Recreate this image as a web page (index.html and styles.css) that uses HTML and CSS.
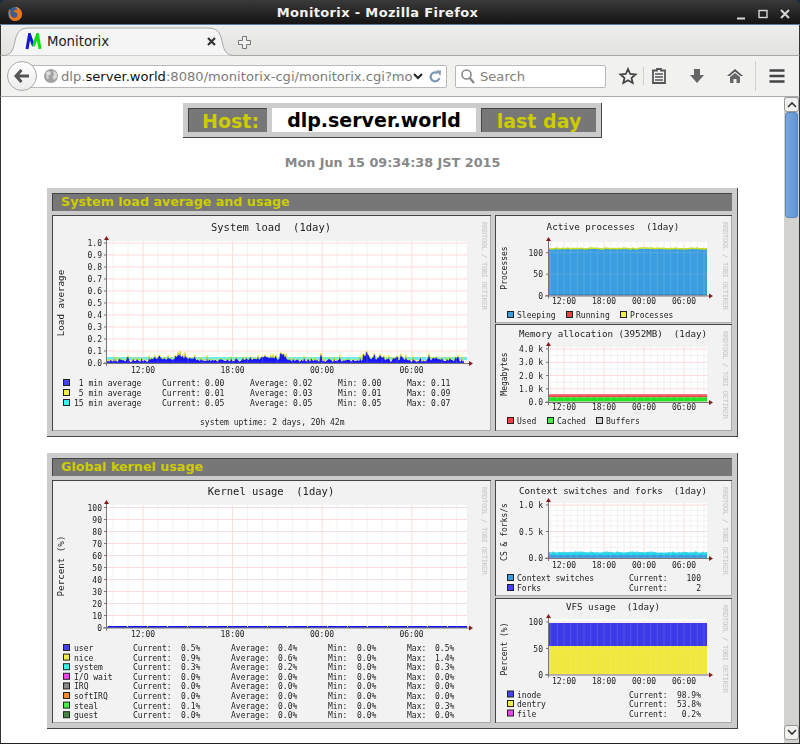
FILE: index.html
```html
<!DOCTYPE html>
<html lang="en">
<head>
    <meta charset="UTF-8">
    <title>Monitorix - Mozilla Firefox</title>
    <link rel="stylesheet" href="styles.css">
    <script src="charts.js" defer></script>
</head>
<body>
<div class="window">
    <header class="titlebar">
        <svg class="ff-logo" width="16" height="16" viewBox="0 0 16 16">
            <circle cx="8" cy="8" r="7" fill="#2f5f96"/>
            <path d="M2 3 C1 8 2 15 8 15 C13 15 15.500 11 15 7 C14 3 11 1 8 1 C10 2 11 3 11 4 C9 3 7 4 6.500 6 C8 5.500 10.500 6.500 10.500 9 C10.500 11 8 12.500 6 11.500 C3.500 10.500 3 7 3.500 5 Z" fill="#e8751a"/>
            <path d="M8 1 C10 1.300 12 2.500 13 4 C11.500 3 10 2.500 8 1 Z" fill="#f6c244"/>
        </svg>
        <span class="window-title">Monitorix - Mozilla Firefox</span>
        <div class="window-buttons">
            <svg width="12" height="12" viewBox="0 0 12 12"><path d="M2 10.500 H10" stroke="#d8d8d8" stroke-width="2"/></svg>
            <svg width="12" height="12" viewBox="0 0 12 12"><rect x="2" y="2.500" width="8" height="7" fill="none" stroke="#d8d8d8" stroke-width="1.400"/></svg>
            <svg width="12" height="12" viewBox="0 0 12 12"><path d="M2 2 L10 10 M10 2 L2 10" stroke="#d8d8d8" stroke-width="2"/></svg>
        </div>
    </header>

    <div class="tabbar">
        <div class="tab">
            <svg class="tab-shape" width="233" height="29" viewBox="0 0 233 29">
                <path d="M0 28.500 C9 28.500 11 24 13 14 C15 5 18 1 27 1 L206 1 C215 1 218 5 220 14 C222 24 224 28.500 233 28.500" fill="#f5f5f5" stroke="#a8a8a8"/>
            </svg>
            <svg class="favicon" width="17" height="17" viewBox="0 0 17 17">
                <path d="M2 16 L4.500 1.500 L8.500 13" fill="none" stroke="#1515d8" stroke-width="3"/>
                <path d="M8.500 13 L12.500 1.500 L15 16" fill="none" stroke="#10e010" stroke-width="3"/>
            </svg>
            <span class="tab-title">Monitorix</span>
            <svg class="tab-close" width="9" height="9" viewBox="0 0 9 9"><path d="M1 1 L8 8 M8 1 L1 8" stroke="#333" stroke-width="2.200"/></svg>
        </div>
        <svg class="new-tab" width="13" height="13" viewBox="0 0 13 13"><path d="M4.500 .5 H8.500 V4.500 H12.500 V8.500 H8.500 V12.500 H4.500 V8.500 H.5 V4.500 H4.500 Z" fill="#f0f0f0" stroke="#777"/></svg>
    </div>

    <nav class="navbar">
        <div class="back-btn">
            <svg width="16" height="14" viewBox="0 0 16 14"><path d="M7.500 1 L2 7 L7.500 13 M2.500 7 H15" fill="none" stroke="#555" stroke-width="3"/></svg>
        </div>
        <div class="urlbar">
            <svg class="globe" width="14" height="14" viewBox="0 0 14 14">
                <circle cx="7" cy="7" r="7" fill="#a2a2a2"/>
                <path d="M2 3 L6 2 L7 5 L4 7 L5 10 L3 10 Z M9 1.500 L12.500 4 L13 8 L10 11 L8.500 8 L10 6 Z" fill="#dcdcdc"/>
            </svg>
            <div class="url-text">dlp.<b>server.world</b>:8080/monitorix-cgi/monitorix.cgi?mo</div>
            <svg width="10" height="7" viewBox="0 0 10 7"><path d="M1 1 L5 5 L9 1" fill="none" stroke="#222" stroke-width="2"/></svg>
            <svg class="reload" width="12" height="13" viewBox="0 0 12 13"><path d="M10.500 8 A4.500 4.500 0 1 1 8.500 3" fill="none" stroke="#7d98b5" stroke-width="2.200"/><path d="M7 .5 L12 .5 L11.500 6 Z" fill="#7d98b5"/></svg>
        </div>
        <div class="searchbar">
            <svg width="14" height="15" viewBox="0 0 14 15"><circle cx="5.500" cy="5.500" r="4.500" fill="none" stroke="#888" stroke-width="1.600"/><path d="M8.800 9 L13 14" stroke="#888" stroke-width="2.200"/></svg>
            <span class="search-text">Search</span>
        </div>
        <div class="tools">
            <svg class="tool star" width="20" height="18" viewBox="0 0 20 18"><path d="M10 2 L12.200 7 L17.500 7.500 L13.500 11 L14.700 16 L10 13.300 L5.300 16 L6.500 11 L2.500 7.500 L7.800 7 Z" fill="none" stroke="#444" stroke-width="1.800"/></svg>
            <span class="tool-sep"></span>
            <svg class="tool clip" width="20" height="16" viewBox="0 0 20 16"><path d="M8 1 H12 V2.500 H16 V15 H4 V2.500 H8 Z" fill="none" stroke="#555" stroke-width="1.800"/><path d="M6 6 H14 M6 9 H14 M6 12 H14" stroke="#555" stroke-width="1.500"/></svg>
            <svg class="tool down" width="20" height="16" viewBox="0 0 20 16"><path d="M7 1 H13 V7 H17 L10 15 L3 7 H7 Z" fill="#666"/></svg>
            <svg class="tool home" width="20" height="16" viewBox="0 0 20 16"><path d="M10 1 L18 8 L15.500 8 L10 3.500 L4.500 8 L2 8 Z" fill="#555"/><path d="M5 9 L10 5 L15 9 V15 H11.500 V11 H8.500 V15 H5 Z" fill="#666"/></svg>
            <span class="tool-sep tall"></span>
            <svg class="tool menu" width="20" height="16" viewBox="0 0 20 16"><path d="M2.500 2.500 H17.500 M2.500 8 H17.500 M2.500 13.500 H17.500" stroke="#444" stroke-width="2.600"/></svg>
        </div>
    </nav>

    <div class="viewport">
        <main class="page">
            <div class="hostbar">
                <div class="host-label">Host:</div>
                <div class="host-name">dlp.server.world</div>
                <div class="host-period">last day</div>
            </div>
            <p class="datestamp">Mon Jun 15 09:34:38 JST 2015</p>

            <section class="panel">
                <h2 class="panel-title">System load average and usage</h2>
                <div class="panel-row">
                    <div class="graph graph-main" data-chart="load"></div>
                    <div class="graph-side">
                        <div class="graph" data-chart="procs"></div>
                        <div class="graph" data-chart="mem"></div>
                    </div>
                </div>
            </section>

            <section class="panel">
                <h2 class="panel-title">Global kernel usage</h2>
                <div class="panel-row">
                    <div class="graph graph-main" data-chart="kernel"></div>
                    <div class="graph-side">
                        <div class="graph" data-chart="ctx"></div>
                        <div class="graph" data-chart="vfs"></div>
                    </div>
                </div>
            </section>
        </main>
        <div class="scrollbar">
            <div class="scroll-btn">
                <svg width="10" height="7" viewBox="0 0 10 7"><path d="M1 6 L5 2 L9 6" fill="none" stroke="#333" stroke-width="1.600"/></svg>
            </div>
            <div class="scroll-thumb"></div>
            <div class="scroll-btn scroll-btn-end">
                <svg width="10" height="7" viewBox="0 0 10 7"><path d="M1 1 L5 5 L9 1" fill="none" stroke="#333" stroke-width="1.600"/></svg>
            </div>
        </div>
    </div>
</div>
</body>
</html>
```

FILE: styles.css
```css
* {
    box-sizing: border-box;
}

body {
    margin: 0;
    background-color: #fff;
    font-family: "DejaVu Sans", sans-serif;
}

.window {
    width: 800px;
    height: 744px;
    display: flex;
    flex-direction: column;
    overflow: hidden;
    background-color: #1c2a44;
    border-bottom: 1px solid #222;
}

/* title bar */
.titlebar {
    height: 25px;
    flex: none;
    position: relative;
    display: flex;
    align-items: center;
    justify-content: center;
    background: linear-gradient(#3a3a3a, #141414);
    border-radius: 6px 6px 0 0;
    border-bottom: 1px solid #5b7aa8;
}

.ff-logo {
    position: absolute;
    left: 7px;
    top: 6px;
}

.window-title {
    margin-left: -45px;
    color: #f2f2f2;
    font-size: 13px;
    font-weight: bold;
    letter-spacing: 0.35px;
}

.window-buttons {
    position: absolute;
    right: 9px;
    top: 8px;
    display: flex;
    gap: 10px;
}

/* tabs */
.tabbar {
    height: 31px;
    flex: none;
    display: flex;
    align-items: flex-end;
    padding-left: 2px;
    background: linear-gradient(#eeeeec, #e2e2e0);
    border-bottom: 1px solid #a8a8a8;
    border-left: 1px solid #333;
    border-right: 1px solid #333;
}

.tab {
    width: 233px;
    height: 29px;
    position: relative;
    display: flex;
    align-items: center;
    padding: 0 0 1px 23px;
    margin-bottom: -1px;
    margin-left: -1px;
}

.tab-shape {
    position: absolute;
    left: 0;
    top: 0;
}

.favicon,
.tab-title,
.tab-close {
    position: relative;
}

.tab-title {
    margin-left: 5px;
    font-size: 13.3px;
    color: #222;
}

.tab-close {
    margin-left: 98px;
}

.new-tab {
    margin: 0 0 6px 3px;
}

/* nav bar */
.navbar {
    height: 41px;
    flex: none;
    display: flex;
    align-items: center;
    padding-left: 6px;
    background: #f1f1f0;
    border-bottom: 1px solid #ababab;
    border-left: 1px solid #333;
    border-right: 1px solid #333;
}

.back-btn {
    width: 30px;
    height: 30px;
    margin-right: -15px;
    position: relative;
    z-index: 1;
    display: flex;
    align-items: center;
    justify-content: center;
    background: linear-gradient(#fff, #ececec);
    border: 1px solid #a9a9a9;
    border-radius: 50%;
}

.urlbar {
    width: 425px;
    height: 23px;
    display: flex;
    align-items: center;
    padding-left: 21px;
    background: #fff;
    border: 1px solid #b8b8b8;
    border-radius: 2px;
}

.url-text {
    width: 352px;
    margin-left: 3px;
    overflow: hidden;
    white-space: nowrap;
    font-size: 13.1px;
    color: #7b7b7b;
}

.url-text b {
    font-weight: normal;
    color: #111;
}

.urlbar .reload {
    margin-left: 6px;
}

.urlbar svg {
    flex: none;
}

.searchbar {
    width: 151px;
    height: 23px;
    margin-left: 8px;
    display: flex;
    align-items: center;
    gap: 5px;
    padding-left: 5px;
    background: #fff;
    border: 1px solid #b8b8b8;
    border-radius: 2px;
}

.search-text {
    font-size: 13.1px;
    color: #808080;
}

.tools {
    display: flex;
    align-items: center;
}

.tool {
    flex: none;
}

.star {
    margin-left: 12px;
}

.tool-sep {
    width: 1px;
    height: 18px;
    margin: 0 5px;
    background-color: #cfcfcf;
}

.tool-sep.tall {
    height: 30px;
    margin: 0 11px 0 10px;
}

.down,
.home {
    margin-left: 18px;
}

/* page area */
.viewport {
    flex: 1;
    min-height: 0;
    display: flex;
    background-color: #fff;
    border-left: 1px solid #333;
    border-right: 1px solid #333;
}

.page {
    flex: 1;
    min-width: 0;
    overflow: hidden;
    padding-top: 6px;
}

.hostbar {
    width: 419px;
    margin: 0 auto;
    display: flex;
    gap: 5px;
    padding: 5px;
    background-color: #ccc;
    border-right: 1px solid #444;
    border-bottom: 1px solid #444;
}

.hostbar > div {
    height: 24px;
    line-height: 24px;
    font-size: 19px;
    font-weight: bold;
}

.host-label,
.host-period {
    background-color: #777;
    color: #cccc00;
    border-top: 1px solid #444;
    border-left: 1px solid #444;
}

.host-label {
    width: 79px;
    padding-right: 8px;
    text-align: right;
}

.host-name {
    width: 204px;
    background-color: #fff;
    color: #000;
    text-align: center;
}

.host-period {
    width: 115px;
    text-align: center;
}

.datestamp {
    margin: 17px 0;
    text-align: center;
    font-size: 12.8px;
    font-weight: bold;
    line-height: 16px;
    color: #888;
}

.panel {
    width: 691px;
    margin: 0 auto 16px;
    padding: 5px;
    background-color: #ccc;
    border-right: 1px solid #444;
    border-bottom: 1px solid #444;
}

.panel-title {
    height: 18px;
    margin: 0 0 4px;
    padding-left: 8px;
    line-height: 16px;
    font-size: 12.7px;
    font-weight: bold;
    color: #cccc00;
    background-color: #777;
    border-top: 1px solid #444;
    border-left: 1px solid #444;
}

.panel-row {
    display: flex;
    gap: 4px;
}

.graph-side {
    display: flex;
    flex-direction: column;
    justify-content: space-between;
}

.graph {
    border-top: 1px solid #444;
    border-left: 1px solid #444;
    line-height: 0;
}

.graph svg {
    display: block;
    background-color: #f2f2f2;
    border-right: 1px solid #aaa;
    border-bottom: 1px solid #aaa;
    filter: blur(0.25px);
}

.graph text {
    font-family: "DejaVu Sans Mono", monospace;
    font-size: 8px;
    fill: #222;
    white-space: pre;
}

.graph .chart-title {
    font-size: 9.2px;
    fill: #222;
}

.graph-main .chart-title {
    font-size: 10.5px;
}

.graph .axis-label {
    font-size: 8px;
    fill: #222;
}

.graph-main .axis-label {
    font-size: 9.2px;
}

.graph .watermark {
    font-size: 7px;
    fill: #c4c4c4;
}

/* scrollbar */
.scrollbar {
    width: 15px;
    flex: none;
    position: relative;
    display: flex;
    flex-direction: column;
    align-items: center;
    padding-bottom: 3px;
    background-color: #d2d2ce;
}

.scroll-btn {
    width: 15px;
    height: 15px;
    flex: none;
    display: flex;
    align-items: center;
    justify-content: center;
    background-color: #f0f0ee;
    border: 1px solid #999;
    border-radius: 3px;
}

.scroll-btn-end {
    margin-top: auto;
}

.scroll-thumb {
    width: 13px;
    height: 106px;
    background: linear-gradient(90deg, #7aa7dc, #5f94d2);
    border: 1px solid #5a86bb;
    border-radius: 3px;
}
```

FILE: charts.js
```js
const NS = 'http://www.w3.org/2000/svg';

const BLUE = '#4444ee', YELLOW = '#eeee44', CYAN = '#44eeee', SKY = '#3a9de0';
const RED = '#ee4444', GREEN = '#44ee44', MAGENTA = '#ee44ee', GRAY = '#888888';
const ORANGE = '#ee8a2c', DARKGREEN = '#448844', LIGHTGRAY = '#cccccc';

// small seeded generator so the jagged series stay the same on every load
let seed = 17;
function rnd() {
    seed = (seed * 16807) % 2147483647;
    return seed / 2147483647;
}

function el(parent, tag, attrs, text) {
    const node = document.createElementNS(NS, tag);
    for (const k in attrs) node.setAttribute(k, attrs[k]);
    if (text !== undefined) node.textContent = text;
    parent.appendChild(node);
    return node;
}

function pct(v) {
    return v.toFixed(1) + '%';
}

const MAIN_X = [143, 232.6, 322, 411.5];
const SIDE_X = [564, 604, 644, 684];
const HOURS = ['12:00', '18:00', '00:00', '06:00'];

const charts = {
    load: {
        box: [53, 215, 438, 215],
        title: 'System load  (1day)', titleY: 230, titleX: 271,
        axis: 'Load average', axisX: 64, axisY: 302,
        x0: 106, x1: 467, top: 240, bottom: 362, minor: 6,
        xs: MAIN_X, xLabelY: 372, watermarkX: 481.5,
        ticks: [1.0, 0.9, 0.8, 0.7, 0.6, 0.5, 0.4, 0.3, 0.2, 0.1, 0.0].map((v, i) => [v.toFixed(1), 242 + i * 12]),
        labelX: 102,
        draw: drawLoad,
        legend: [
            [382, BLUE, 63, [[74, ' 1 min average'], [162, 'Current:'], [205, '0.00'], [250, 'Average:'], [293, '0.02'], [338, 'Min:'], [362, '0.00'], [407, 'Max:'], [431, '0.11']]],
            [392, YELLOW, 63, [[74, ' 5 min average'], [162, 'Current:'], [205, '0.01'], [250, 'Average:'], [293, '0.03'], [338, 'Min:'], [362, '0.01'], [407, 'Max:'], [431, '0.09']]],
            [402, CYAN, 63, [[74, '15 min average'], [162, 'Current:'], [205, '0.05'], [250, 'Average:'], [293, '0.05'], [338, 'Min:'], [362, '0.05'], [407, 'Max:'], [431, '0.07']]]
        ],
        notes: [[200, 424, 'system uptime: 2 days, 20h 42m']]
    },
    procs: {
        box: [496, 215, 236, 107],
        title: 'Active processes  (1day)', titleY: 229, titleX: 613,
        axis: 'Processes', axisX: 507, axisY: 267,
        x0: 548, x1: 707, top: 241, bottom: 294.5, minor: 6,
        xs: SIDE_X, xLabelY: 303, watermarkX: 723,
        ticks: [['100', 251.7], ['50', 273.2], ['0', 294.5]],
        labelX: 543,
        draw(g) {
            band(g, 549, 707, 247.5, 294, SKY);
            jagged(g, 549, 707, 247, 1, '#c8e020');
            el(g, 'rect', { x: 549, y: 293.500, width: 158, height: 1, fill: '#3070b0' });
        },
        legend: [[314, SKY, 507, [[517, 'Sleeping']]]],
        swatches: [[566, 314, RED, 'Running'], [620, 314, YELLOW, 'Processes']]
    },
    mem: {
        box: [496, 324, 236, 106],
        title: 'Memory allocation (3952MB)  (1day)', titleY: 336, titleX: 613,
        axis: 'Megabytes', axisX: 507, axisY: 373,
        x0: 548, x1: 707, top: 346, bottom: 401, minor: 6, yMinor: 2,
        xs: SIDE_X, xLabelY: 409, watermarkX: 723,
        ticks: [['4.0 k', 348], ['3.0 k', 361.3], ['2.0 k', 374.5], ['1.0 k', 387.8], ['0.0', 401]],
        labelX: 543,
        draw(g) {
            band(g, 549, 707, 393.3, 396.3, RED);
            band(g, 549, 707, 396.3, 400.5, '#22e022');
        },
        legend: [[420, RED, 507, [[517, 'Used']]]],
        swatches: [[547, 420, GREEN, 'Cached'], [596, 420, LIGHTGRAY, 'Buffers']]
    },
    kernel: {
        box: [53, 481, 438, 242],
        title: 'Kernel usage  (1day)', titleY: 495, titleX: 271,
        axis: 'Percent (%)', axisX: 64, axisY: 566,
        x0: 106, x1: 467, top: 505, bottom: 627.5, minor: 6,
        xs: MAIN_X, xLabelY: 637, watermarkX: 481.5,
        ticks: [100, 90, 80, 70, 60, 50, 40, 30, 20, 10, 0].map((v, i) => [String(v), 507.5 + i * 12]),
        labelX: 102,
        draw(g) {
            el(g, 'line', { x1: 107, x2: 467, y1: 627, y2: 627, stroke: '#1010e8', 'stroke-width': 1.800 });
            el(g, 'line', { x1: 107, x2: 467, y1: 626.500, y2: 626.500, stroke: YELLOW, 'stroke-width': 1, 'stroke-dasharray': '1 19' });
        },
        legend: [
            ['user', BLUE, 0.5, 0.4, 0.0, 0.5],
            ['nice', YELLOW, 0.9, 0.6, 0.0, 1.4],
            ['system', CYAN, 0.3, 0.2, 0.0, 0.3],
            ['I/O wait', MAGENTA, 0, 0, 0, 0],
            ['IRQ', GRAY, 0, 0, 0, 0],
            ['softIRQ', ORANGE, 0, 0, 0, 0],
            ['steal', GREEN, 0.1, 0.0, 0.0, 0.3],
            ['guest', DARKGREEN, 0, 0, 0, 0]
        ].map((r, i) => [648 + i * 9.6, r[1], 63, [
            [74, r[0]], [133, 'Current:'], [181, pct(r[2])], [231, 'Average:'], [278, pct(r[3])],
            [328, 'Min:'], [357, pct(r[4])], [407, 'Max:'], [435, pct(r[5])]
        ]])
    },
    ctx: {
        box: [496, 481, 236, 115],
        title: 'Context switches and forks  (1day)', titleY: 494, titleX: 613,
        axis: 'CS & forks/s', axisX: 507, axisY: 532,
        x0: 548, x1: 707, top: 503, bottom: 558, minor: 6, yMinor: 5,
        xs: SIDE_X, xLabelY: 568, watermarkX: 723,
        ticks: [['1.0 k', 505], ['0.5 k', 531.5], ['0.0', 558]],
        labelX: 543,
        draw(g) {
            band(g, 549, 707, 554, 558, SKY);
            jagged(g, 549, 707, 551.5, 1.2, '#22d4e8', 555);
        },
        legend: [
            [578, SKY, 507, [[517, 'Context switches'], [629, 'Current:']], '100'],
            [588, BLUE, 507, [[517, 'Forks'], [629, 'Current:']], '2']
        ]
    },
    vfs: {
        box: [496, 598, 236, 124],
        title: 'VFS usage  (1day)', titleY: 609, titleX: 613,
        axis: 'Percent (%)', axisX: 507, axisY: 648,
        x0: 548, x1: 707, top: 618, bottom: 673.5, minor: 6,
        xs: SIDE_X, xLabelY: 683, watermarkX: 723,
        ticks: [['100', 621], ['50', 647.5], ['0', 673.5]],
        labelX: 543,
        draw(g) {
            band(g, 549, 707, 622, 645, '#3a3ae8');
            band(g, 549, 707, 645, 673, '#f0e83c');
        },
        legend: [
            [693.500, BLUE, 507, [[517, 'inode'], [629, 'Current:']], '98.9%'],
            [703, YELLOW, 507, [[517, 'dentry'], [629, 'Current:']], '53.8%'],
            [712.500, MAGENTA, 507, [[517, 'file'], [629, 'Current:']], '0.2%']
        ]
    }
};

function band(g, x0, x1, y0, y1, fill) {
    el(g, 'rect', { x: x0, y: y0, width: x1 - x0, height: y1 - y0, fill: fill });
}

function jagged(g, x0, x1, y, amp, color, floor) {
    let pts = [];
    for (let x = x0; x <= x1; x += 2) pts.push(x + ',' + (y + rnd() * amp).toFixed(1));
    if (floor) {
        pts.push(x1 + ',' + floor, x0 + ',' + floor);
        el(g, 'polygon', { points: pts.join(' '), fill: color });
    } else {
        el(g, 'polyline', { points: pts.join(' '), fill: 'none', stroke: color, 'stroke-width': 1.500 });
    }
}

// rough copy of the 1 min / 5 min series: a low blue floor with bursts
function drawLoad(g) {
    const base = 362;
    const bursts = [[168, 20, 2.5], [186, 12, 2], [258, 14, 2], [270, 10, 2], [321, 2, 8], [283, 4, 5], [366, 4, 5], [375, 10, 2.5], [398, 6, 2.5], [432, 6, 2.5], [457, 3, 3]];
    el(g, 'rect', { x: 107, y: 356, width: 360, height: 3, fill: '#66eeee' });
    const blue = [], yellow = [];
    for (let x = 107; x <= 464; x += 1) {
        let h = rnd() * 2.6 + 1;
        if (rnd() < 0.18) h += 2 + rnd() * 2.5;
        for (const b of bursts) {
            if (Math.abs(x - b[0]) < b[1]) h += rnd() * b[2] + b[2] * 0.4;
        }
        h = Math.min(h, 12);
        blue.push(x + ',' + (base - h).toFixed(1));
        yellow.push(x + ',' + (base - h - 0.8).toFixed(1));
    }
    el(g, 'polygon', { points: '107,' + base + ' ' + blue.join(' ') + ' 464,' + base, fill: '#1a1af0' });
    el(g, 'polyline', { points: yellow.join(' '), fill: 'none', stroke: '#e8e820', 'stroke-width': 0.7 });
}

function drawGrid(g, c) {
    // vertical lines, one major per 6h
    const step = (c.xs[1] - c.xs[0]) / c.minor;
    for (let k = -c.minor; k * step + c.xs[0] <= c.x1; k++) {
        const x = c.xs[0] + k * step;
        if (x <= c.x0) continue;
        const major = k % c.minor === 0;
        el(g, 'line', { x1: x, x2: x, y1: c.top, y2: c.bottom, stroke: major ? '#fbdcdc' : '#f2f2f2' });
    }
    c.ticks.forEach((t, i) => {
        el(g, 'line', { x1: c.x0, x2: c.x1, y1: t[1], y2: t[1], stroke: '#fbdcdc' });
        const next = c.ticks[i + 1];
        if (next && c.yMinor) {
            for (let m = 1; m < c.yMinor; m++) {
                const y = t[1] + (next[1] - t[1]) * m / c.yMinor;
                el(g, 'line', { x1: c.x0, x2: c.x1, y1: y, y2: y, stroke: '#f2f2f2' });
            }
        }
    });
}

function drawAxes(g, c) {
    const ax = c.x0 + 0.5, ay = c.bottom + 0.5;
    el(g, 'line', { x1: ax, x2: ax, y1: c.top - 2, y2: c.bottom + 3, stroke: '#777' });
    el(g, 'line', { x1: c.x0 - 3, x2: c.x1 + 3, y1: ay, y2: ay, stroke: '#777' });
    el(g, 'polygon', { points: `${ax - 2.5},${c.top - 1} ${ax + 2.5},${c.top - 1} ${ax},${c.top - 5}`, fill: '#8b1a1a' });
    el(g, 'polygon', { points: `${c.x1 + 2},${ay - 2.5} ${c.x1 + 2},${ay + 2.5} ${c.x1 + 6},${ay}`, fill: '#8b1a1a' });
    c.ticks.forEach(t => {
        el(g, 'line', { x1: c.x0 - 2, x2: c.x0, y1: t[1], y2: t[1], stroke: '#777' });
        el(g, 'text', { x: c.labelX, y: t[1] + 3, 'text-anchor': 'end' }, t[0]);
    });
    c.xs.forEach((x, i) => {
        el(g, 'text', { x: x, y: c.xLabelY, 'text-anchor': 'middle' }, HOURS[i]);
    });
}

function swatch(g, x, y, color) {
    el(g, 'rect', { x: x + 0.5, y: y - 3.5, width: 6, height: 6, fill: color, stroke: '#222' });
}

function drawLegend(g, c) {
    (c.legend || []).forEach(row => {
        swatch(g, row[2], row[0], row[1]);
        row[3].forEach(t => {
            el(g, 'text', { x: t[0], y: row[0] + 3 }, t[1]);
        });
        if (row[4]) el(g, 'text', { x: 701, y: row[0] + 3, 'text-anchor': 'end' }, row[4]);
    });
    (c.swatches || []).forEach(s => {
        swatch(g, s[0], s[1], s[2]);
        el(g, 'text', { x: s[0] + 10, y: s[1] + 3 }, s[3]);
    });
    (c.notes || []).forEach(n => el(g, 'text', { x: n[0], y: n[1] }, n[2]));
}

document.querySelectorAll('.graph').forEach(holder => {
    const c = charts[holder.dataset.chart];
    const [bx, by, bw, bh] = c.box;
    const svg = el(holder, 'svg', { width: bw, height: bh, viewBox: `${bx} ${by} ${bw - 1} ${bh - 1}` });
    svg.style.width = bw + 'px';
    svg.style.height = bh + 'px';

    el(svg, 'rect', { x: c.x0, y: c.top, width: c.x1 - c.x0, height: c.bottom - c.top, fill: '#fff' });
    drawGrid(svg, c);
    c.draw(svg);
    // rrdtool lays the grid over the data, faintly
    drawGrid(el(svg, 'g', { opacity: 0.15 }), c);
    drawAxes(svg, c);

    el(svg, 'text', { x: c.titleX, y: c.titleY, 'text-anchor': 'middle', class: 'chart-title' }, c.title);
    el(svg, 'text', {
        x: c.axisX, y: c.axisY, 'text-anchor': 'middle', class: 'axis-label',
        transform: `rotate(-90 ${c.axisX} ${c.axisY})`
    }, c.axis);
    const wy = by + 6;
    el(svg, 'text', {
        x: c.watermarkX, y: wy, class: 'watermark', textLength: 88,
        transform: `rotate(90 ${c.watermarkX} ${wy})`
    }, 'RRDTOOL / TOBI OETIKER');

    drawLegend(svg, c);
});
```
